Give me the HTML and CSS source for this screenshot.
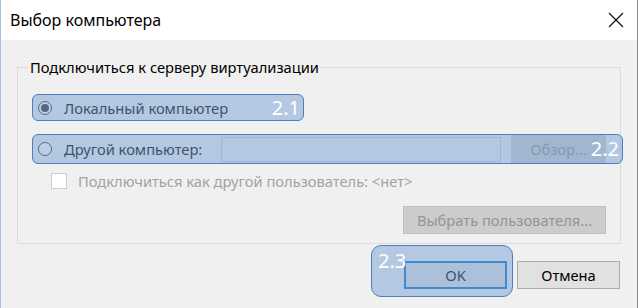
FILE: index.html
```html
<!DOCTYPE html>
<html lang="ru">
<head>
    <meta charset="UTF-8">
    <title>Выбор компьютера</title>
    <link rel="stylesheet" href="styles.css">
</head>
<body>
    <div class="window">
        <div class="titlebar">
            <span class="title">Выбор компьютера</span>
            <svg class="close" width="16" height="16" viewBox="0 0 16 16">
                <path d="M1 1 L15 15 M15 1 L1 15" stroke="#111" stroke-width="1.2" fill="none"/>
            </svg>
        </div>
        <div class="content">
            <fieldset class="group">
                <legend>Подключиться к серверу виртуализации</legend>
                <div class="option option-local marked">
                    <span class="radio checked"></span>
                    <span class="label">Локальный компьютер</span>
                    <span class="tag">2.1</span>
                </div>
                <div class="option option-remote marked">
                    <span class="radio"></span>
                    <span class="label">Другой компьютер:</span>
                    <span class="textbox"></span>
                    <span class="btn btn-disabled btn-browse">Обзор...</span>
                    <span class="tag">2.2</span>
                </div>
                <div class="check-row">
                    <span class="checkbox"></span>
                    <span class="label muted">Подключиться как другой пользователь: &lt;нет&gt;</span>
                </div>
                <div class="user-row">
                    <span class="btn btn-disabled btn-user">Выбрать пользователя...</span>
                </div>
            </fieldset>
            <div class="footer">
                <div class="ok-wrap marked">
                    <span class="btn btn-default">OK</span>
                    <span class="tag tag-ok">2.3</span>
                </div>
                <span class="btn btn-cancel">Отмена</span>
            </div>
        </div>
    </div>
</body>
</html>
```

FILE: styles.css
```css
body {
    margin: 0;
    background-color: #ffffff;
    font-family: "Noto Sans", sans-serif;
    font-size: 14.7px;
    color: #000000;
}

.window {
    width: 636px;
    height: 308px;
    border-left: 1px solid #a9c1e0;
    border-right: 1px solid #8a8a8a;
    background-color: #f0f0f0;
    overflow: hidden;
}

.titlebar {
    height: 40px;
    background-color: #ffffff;
    display: flex;
    align-items: center;
    justify-content: space-between;
    padding: 0 13px 0 9px;
}

.title {
    font-size: 16px;
}

.content {
    padding: 17px 16px 0;
}

.group {
    margin: 0;
    padding: 17px 14px 9px;
    border: 1px solid #dcdcdc;
    min-width: 0;
}

.group legend {
    padding: 0 2px;
    margin-left: -4px;
    line-height: 20px;
}

.option {
    display: flex;
    align-items: center;
    position: relative;
    box-sizing: border-box;
    padding-left: 6px;
}

.option-local {
    width: 272px;
    height: 27px;
}

.option-remote {
    height: 30px;
    margin-top: 13px;
    margin-right: -17px;
    padding-right: 17px;
}

.radio {
    width: 14px;
    height: 14px;
    box-sizing: border-box;
    border: 1px solid #333333;
    border-radius: 50%;
    background-color: #ffffff;
    display: flex;
    align-items: center;
    justify-content: center;
    margin-right: 12px;
}

.radio.checked::after {
    content: '';
    width: 8px;
    height: 8px;
    border-radius: 50%;
    background-color: #333333;
}

.textbox {
    margin-left: auto;
    width: 280px;
    height: 25px;
    box-sizing: border-box;
    border: 1px solid #cccccc;
    background-color: #f0f0f0;
}

.btn {
    display: flex;
    align-items: center;
    justify-content: center;
    box-sizing: border-box;
    width: 103px;
    height: 28px;
    border: 1px solid #adadad;
    background-color: #e1e1e1;
}

.btn-disabled {
    background-color: #cccccc;
    border-color: #bfbfbf;
    color: #949494;
}

.btn-browse {
    width: 95px;
    height: 29px;
    margin-left: 10px;
    border-color: #cccccc;
}

.check-row {
    display: flex;
    align-items: center;
    height: 22px;
    margin-top: 6px;
    padding-left: 19px;
}

.checkbox {
    width: 16px;
    height: 16px;
    box-sizing: border-box;
    border: 1px solid #cccccc;
    background-color: #ffffff;
    margin-right: 11px;
}

.muted {
    color: #a3a3a3;
}

.user-row {
    display: flex;
    justify-content: flex-end;
    margin-top: 14px;
}

.btn-user {
    width: 203px;
}

.footer {
    display: flex;
    justify-content: flex-end;
    align-items: flex-start;
    padding-right: 1px;
}

.ok-wrap {
    position: relative;
    margin-top: 1px;
    padding: 16px 6px 8px 33px;
}

.btn-default {
    border: 2px solid #0078d7;
}

.btn-cancel {
    margin-top: 17px;
    margin-left: 4px;
}

/* annotation overlays */
.marked::after {
    content: '';
    position: absolute;
    top: 0;
    left: 0;
    right: 0;
    bottom: 0;
    background-color: rgba(119, 160, 210, 0.5);
    border: 1px solid #4f7fc2;
    border-radius: 6px;
    z-index: 1;
}

.ok-wrap.marked::after {
    border-radius: 10px;
}

.tag {
    position: absolute;
    right: 4px;
    top: 50%;
    transform: translateY(-50%);
    color: #ffffff;
    font-size: 20px;
    line-height: 24px;
    z-index: 2;
}

.tag-ok {
    right: auto;
    left: 7px;
    top: 4px;
    transform: none;
}
```
